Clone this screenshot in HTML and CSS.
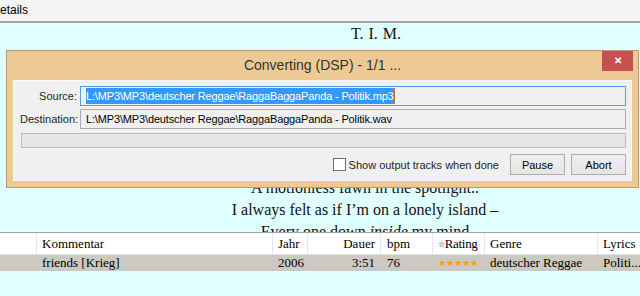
FILE: index.html
```html
<!DOCTYPE html>
<html lang="de">
<head>
  <meta charset="UTF-8" />
  <title>Lyrics - Converting</title>
  <link rel="stylesheet" href="styles.css">
</head>
<body>

  <div class="tabbar">etails</div>

  <div class="lyrics">
    <p class="first">T. I. M.</p>
    <p>you came in a summer rain</p>
    <p>Mitten in der Menge, so wunderbar</p>
    <p>Every step I take, I take it slow</p>
    <p>Nobody knows where the river flows</p>
    <p>Ein Licht in der Nacht, ein leiser Klang</p>
    <p>Und ich weiß nicht wie, doch ich folg ihm lang</p>
    <p>A motionless fawn in the spotlight..</p>
    <p>I always felt as if I’m on a lonely island –</p>
    <p>Every one down <i>inside</i> my mind</p>
  </div>

  <div class="tracks">
    <div class="row head">
      <span></span>
      <span>Kommentar</span>
      <span>Jahr</span>
      <span class="num">Dauer</span>
      <span>bpm</span>
      <span class="rate"><small>&#9734;</small>Rating</span>
      <span>Genre</span>
      <span>Lyrics</span>
    </div>
    <div class="row sel">
      <span></span>
      <span>friends [Krieg]</span>
      <span>2006</span>
      <span class="num">3:51</span>
      <span>76</span>
      <span class="stars">&#9733;&#9733;&#9733;&#9733;&#9733;</span>
      <span>deutscher Reggae</span>
      <span>Politi...</span>
    </div>
  </div>

  <div class="dialog">
    <div class="titlebar">
      <span class="title">Converting (DSP) - 1/1 ...</span>
      <span class="close">&#10005;</span>
    </div>
    <div class="client">
      <div class="field">
        <label>Source:</label>
        <div class="box active"><span class="picked">L:\MP3\MP3\deutscher Reggae\RaggaBaggaPanda - Politik.mp3</span></div>
      </div>
      <div class="field">
        <label>Destination:</label>
        <div class="box">L:\MP3\MP3\deutscher Reggae\RaggaBaggaPanda - Politik.wav</div>
      </div>
      <div class="progress"></div>
      <div class="actions">
        <label class="check"><span class="tick"></span>Show output tracks when done</label>
        <button>Pause</button>
        <button>Abort</button>
      </div>
    </div>
  </div>

</body>
</html>
```

FILE: styles.css
```css
html, body {
  margin: 0;
  height: 296px;
  overflow: hidden;
}
body {
  position: relative;
  background: #e0ffff;
  font-family: 'Liberation Serif', serif;
  color: #000;
}
.tabbar {
  height: 21px;
  line-height: 20px;
  background: #f4f4f6;
  border-bottom: 2px solid #a4a4a4;
  font-family: 'Liberation Sans', sans-serif;
  font-size: 12px;
}
.lyrics {
  height: 209px;
  overflow: hidden;
  padding-left: 90px;
  text-align: center;
  font-size: 16px;
  line-height: 22px;
  color: #111;
}
.lyrics p {
  margin: 0;
  white-space: nowrap;
}
.lyrics .first {
  padding-left: 22px;
  word-spacing: 1px;
}
.tracks {
  border-top: 1px solid #a0a0a0;
  font-size: 13px;
}
.row {
  display: grid;
  grid-template-columns: 36px 236px 35px 73px 52px 52px 113px 43px;
  white-space: nowrap;
}
.row span {
  overflow: hidden;
  padding: 0 5px;
}
.head {
  height: 21px;
  line-height: 21px;
  background: #fff;
  border-bottom: 1px solid #e6e6e6;
}
.head span + span {
  border-left: 1px solid #e2e8f4;
}
.head span:nth-child(5),
.sel span:nth-child(5) {
  padding-left: 6px;
}
.head .rate {
  padding: 0 0 0 5px;
  letter-spacing: -0.3px;
}
.num {
  text-align: right;
}
.rate small {
  font-size: 8px;
  position: relative;
  top: -1px;
}
.sel {
  height: 16px;
  line-height: 16px;
  background: #ccc8c2;
}
.sel span + span {
  border-left: 1px solid transparent;
}
.stars {
  color: #f0a020;
  font-size: 9px;
  font-family: 'DejaVu Sans', sans-serif;
}

/* dialog sits above the lyrics */
.dialog {
  position: absolute;
  left: 6px;
  top: 50px;
  width: 633px;
  height: 138px;
  box-sizing: border-box;
  border: 1px solid #b59a72;
  background: #edc994;
  padding: 0 6px 6px;
  font-family: 'Liberation Sans', sans-serif;
  font-size: 11px;
}
.titlebar {
  position: relative;
  height: 29px;
  text-align: center;
}
.title {
  display: inline-block;
  padding-top: 6px;
  font-size: 14px;
  color: #333;
}
.close {
  position: absolute;
  right: -1px;
  top: 0;
  width: 31px;
  height: 20px;
  line-height: 20px;
  background: #c75050;
  color: #fff;
  font-size: 10px;
  font-weight: bold;
  text-align: center;
}
.client {
  height: 101px;
  box-sizing: border-box;
  background: #f0f0f0;
  border: 1px solid #f8f8f8;
  padding: 5px 5px 0 6px;
}
.field {
  display: flex;
  align-items: center;
  gap: 3px;
  margin-bottom: 3px;
}
.field label {
  width: 57px;
  text-align: right;
  color: #1e1e1e;
  white-space: nowrap;
}
.box {
  flex: 1;
  height: 20px;
  box-sizing: border-box;
  border: 1px solid #abadb3;
  line-height: 18px;
  padding-left: 5px;
  background: #f0f0f0;
  white-space: nowrap;
  overflow: hidden;
  letter-spacing: -0.15px;
}
.box.active {
  border-color: #569de5;
}
.picked {
  background: #3399ff;
  color: #fff;
  border-right: 1px solid #c8702a;
  padding: 2px 0;
}
.progress {
  height: 13px;
  margin: 4px 0 0 1px;
  border: 1px solid #bcbcbc;
  background: #e6e6e6;
}
.actions {
  display: flex;
  align-items: center;
  justify-content: flex-end;
  gap: 6px;
  margin-top: 6px;
}
.check {
  display: flex;
  align-items: center;
  gap: 3px;
  margin-right: 5px;
  color: #1e1e1e;
}
.tick {
  width: 11px;
  height: 11px;
  border: 1px solid #707070;
  background: #fff;
}
button {
  width: 55px;
  height: 21px;
  padding: 0;
  border: 1px solid #acacac;
  background: linear-gradient(#f0f0f0, #e5e5e5);
  font-family: 'Liberation Sans', sans-serif;
  font-size: 11px;
  color: #000;
}
```
